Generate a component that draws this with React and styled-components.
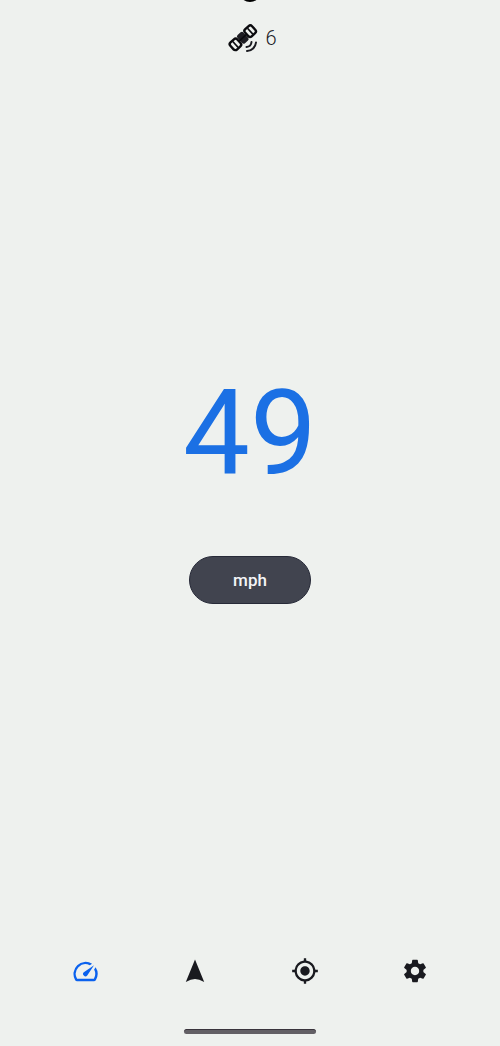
import React from 'react'
import styled, { createGlobalStyle } from 'styled-components'
import { MdMyLocation, MdSettings, MdSpeed } from 'react-icons/md'

const GlobalStyle = createGlobalStyle`
  * {
    box-sizing: border-box;
  }
  body {
    margin: 0;
    background: #eef1ee;
    color: #191a1f;
    font-family: Roboto, 'Liberation Sans', sans-serif;
  }
`

const SatelliteIcon = () => (
  <svg width="28" height="28" viewBox="0 0 28 28" fill="none" stroke="currentColor" overflow="visible" aria-hidden="true">
    {/* body and the two panels, laid along the diagonal */}
    <g transform="translate(13.8 13.8) rotate(-42)" stroke="#0b0b0e" strokeWidth="2.4">
      <rect x="-4" y="-5.5" width="8" height="11" rx="2" fill="#1d1d22" stroke="none" />
      <rect x="-14.6" y="-4.8" width="9.4" height="9.6" rx="2.4" />
      <path d="M-9.9 -4v8" strokeWidth="1.6" />
      <rect x="5.2" y="-4.8" width="9.4" height="9.6" rx="2.4" />
      <path d="M9.9 -4v8M-5 0h10" strokeWidth="1.6" />
    </g>
    {/* signal */}
    <path d="M22.5 18a5.5 5.5 0 0 1-5 5M27 18.5a9.5 9.5 0 0 1-9 8.5" strokeWidth="2" strokeLinecap="round" />
  </svg>
)

const CompassIcon = () => (
  <svg width="28" height="28" viewBox="0 0 28 28" fill="currentColor" aria-hidden="true">
    <path d="M14 2.5L23.2 25Q18 22 14 22Q10 22 4.8 25Z" />
  </svg>
)

const tabs = [
  { name: 'Speed', icon: <MdSpeed size={29} /> },
  { name: 'Compass', icon: <CompassIcon /> },
  { name: 'Location', icon: <MdMyLocation size={28} /> },
  { name: 'Settings', icon: <MdSettings size={28} /> },
]

const App = () => {

  return (

    <Screen>

      <GlobalStyle />

      {/* status */}

      <Header>
        <Camera />
        <SatelliteIcon />
        <span>6</span>
      </Header>

      {/* speed */}

      <Main>
        <Speed>49</Speed>
        <UnitButton type="button">mph</UnitButton>
      </Main>

      {/* bottom tabs */}

      <Nav>
        {tabs.map((tab) => (
          <TabButton key={tab.name} type="button" aria-label={tab.name} $active={tab.name === 'Speed'}>
            {tab.icon}
          </TabButton>
        ))}
      </Nav>

      <HomeBar />

    </Screen>

  )
}

const Screen = styled.div`
  min-height: 100vh;
  display: flex;
  flex-direction: column;
  overflow: hidden;
  position: relative;
`

const Header = styled.header`
  height: 76px;
  display: flex;
  align-items: center;
  justify-content: center;
  gap: 8px;
  padding-left: 6px;
  font-size: 20px;
  font-weight: 300;
`

const Camera = styled.div`
  position: absolute;
  top: -20px;
  left: 50%;
  width: 22px;
  height: 22px;
  margin-left: -11px;
  border-radius: 50%;
  background: #000;
`

const Main = styled.main`
  flex: 1;
  display: flex;
  flex-direction: column;
  align-items: center;
  justify-content: center;
  gap: 52px;
  padding-bottom: 50px;
`

const Speed = styled.div`
  color: #1b70e4;
  font-size: 119px;
  line-height: 140px;
`

const UnitButton = styled.button`
  width: 122px;
  height: 48px;
  border: 1px solid #272a38;
  border-radius: 24px;
  background: #41444f;
  color: #f4f5f7;
  font-family: inherit;
  font-size: 17px;
  font-weight: 500;
  cursor: pointer;
`

const Nav = styled.nav`
  display: grid;
  grid-template-columns: repeat(4, 1fr);
  padding: 0 30px;
  height: 60px;
  margin-bottom: 28px;
`

const TabButton = styled.button`
  display: flex;
  align-items: center;
  justify-content: center;
  padding: 0;
  border: none;
  background: transparent;
  color: ${(props) => (props.$active ? '#0b62ee' : '#191a1f')};
  cursor: pointer;
`

const HomeBar = styled.div`
  width: 132px;
  height: 5px;
  margin: 0 auto 12px;
  border-radius: 3px;
  background: #636065;
  border-top: 1px solid #39343c;
`

export default App
